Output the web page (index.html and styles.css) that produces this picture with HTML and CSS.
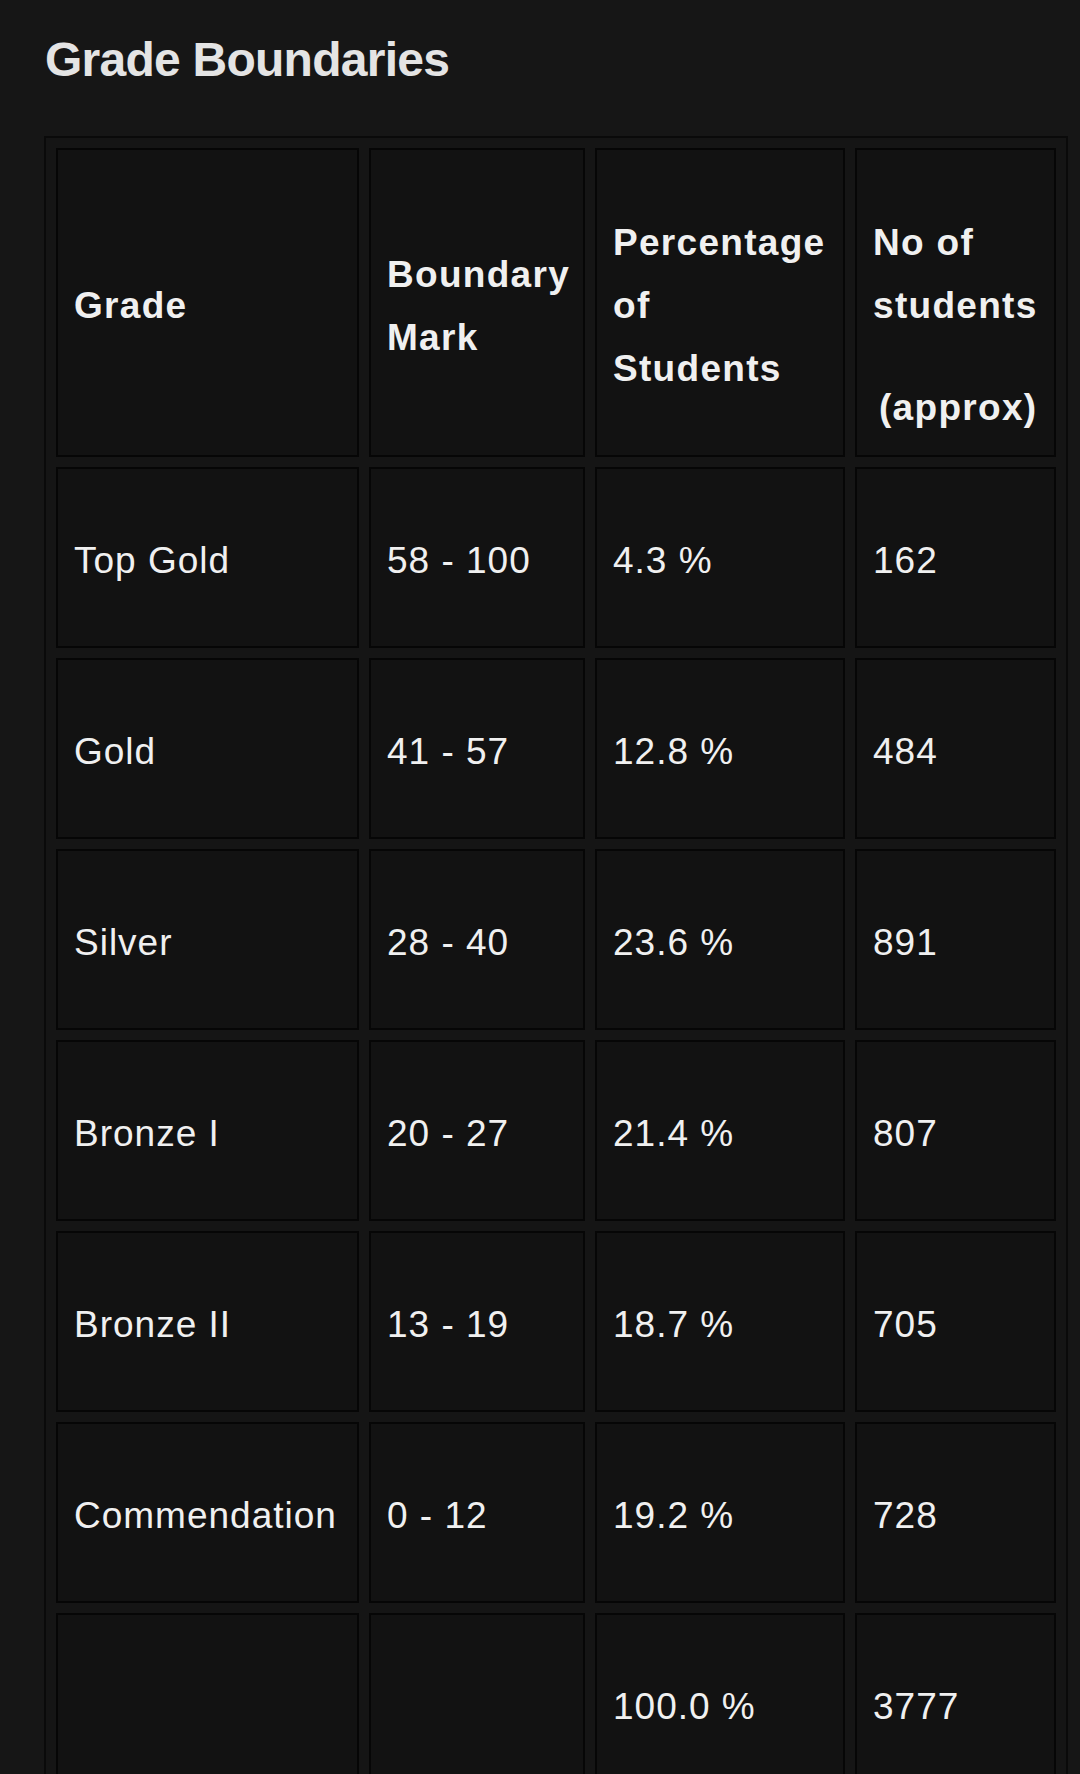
FILE: index.html
```html
<!DOCTYPE html>
<html lang="en">
<head>
<meta charset="utf-8">
<title>Grade Boundaries</title>
<link rel="stylesheet" href="styles.css">
</head>
<body>
<main class="page">
  <h1 class="title">Grade Boundaries</h1>
  <table class="grades">
    <thead>
      <tr class="head-row">
        <th class="c1">Grade</th>
        <th class="c2">Boundary<br>Mark</th>
        <th class="c3">Percentage<br>of<br>Students</th>
        <th class="c4 top">No of<br>students<span class="approx">(approx)</span></th>
      </tr>
    </thead>
    <tbody>
      <tr><td>Top Gold</td><td>58 - 100</td><td>4.3 %</td><td>162</td></tr>
      <tr><td>Gold</td><td>41 - 57</td><td>12.8 %</td><td>484</td></tr>
      <tr><td>Silver</td><td>28 - 40</td><td>23.6 %</td><td>891</td></tr>
      <tr><td>Bronze I</td><td>20 - 27</td><td>21.4 %</td><td>807</td></tr>
      <tr><td>Bronze II</td><td>13 - 19</td><td>18.7 %</td><td>705</td></tr>
      <tr><td>Commendation</td><td>0 - 12</td><td>19.2 %</td><td>728</td></tr>
      <tr><td></td><td></td><td>100.0 %</td><td>3777</td></tr>
    </tbody>
  </table>
</main>
</body>
</html>
```

FILE: styles.css
```css
* { box-sizing: border-box; }

html, body {
  margin: 0;
  padding: 0;
  background: #161616;
}

body {
  font-family: "Liberation Sans", Arial, Helvetica, sans-serif;
  color: #f0f0f0;
}

.page {
  padding: 32px 0 0 44px;
}

.title {
  margin: 0 0 0 1px;
  font-size: 48px;
  line-height: 56px;
  font-weight: 700;
  letter-spacing: -0.75px;
  color: #e4e4e4;
}

.grades {
  margin-top: 48px;
  width: 1024px;
  table-layout: fixed;
  border-collapse: separate;
  border-spacing: 10px 10px;
  border: 2px solid #0a0a0a;
  background: #151515;
}

.grades th,
.grades td {
  border: 2px solid #060606;
  background: #121212;
  padding: 6px 8px 0 16px;
  text-align: left;
  vertical-align: middle;
  font-size: 37px;
  line-height: 63px;
  white-space: nowrap;
  overflow: hidden;
}

.grades th {
  font-weight: 700;
  letter-spacing: 1.3px;
}

.grades td {
  font-weight: 400;
  letter-spacing: 1px;
}

.c1 { width: 303px; }
.c2 { width: 216px; }
.c3 { width: 250px; }
.c4 { width: 201px; }

.head-row { height: 309px; }
.grades tbody tr { height: 181px; }

.grades th.top {
  vertical-align: top;
  padding-top: 61px;
}

.approx {
  display: block;
  margin-top: 39px;
  margin-left: 6px;
}
```
